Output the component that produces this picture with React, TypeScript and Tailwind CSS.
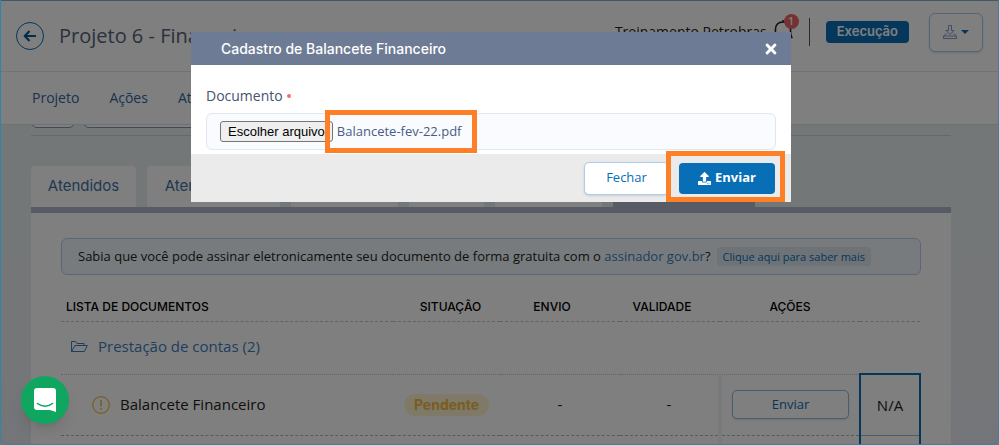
import React from "react";
import { FaTimes, FaUpload } from "react-icons/fa";

const TABS = [
  { label: "Atendidos", width: "w-[105px]" },
  { label: "Atendimentos", width: "w-[133px]" },
  { label: "", width: "w-[107px]" },
  { label: "", width: "w-[75px]" },
  { label: "", width: "w-[107px]" },
];

const BellIcon: React.FC = () => (
  <svg width="20" height="24" viewBox="0 0 20 24" fill="none" stroke="#222" strokeWidth="1.6">
    <path d="M10 0v2M1 17.500c1.500-1.500 1.500-3.500 1.500-8C2.500 5 5 2 10 2s7.500 3 7.500 7.500c0 4.500 0 6.500 1.500 8H1z" strokeLinejoin="round" />
    <path d="M8 20.500c.5 1 3.500 1 4 0" />
  </svg>
);

const DownloadIcon: React.FC = () => (
  <svg width="14" height="14" viewBox="0 0 14 14" fill="none" stroke="#7f9cd0" strokeWidth="1">
    <path d="M5.500.5h3v5h2.500L7 9.500 3 5.500h2.500z" />
    <path d="M3.500 8.500 .5 11v2.500h13V11l-3-2.500M.5 11h13" />
  </svg>
);

const FolderIcon: React.FC = () => (
  <svg width="18" height="13" viewBox="0 0 18 13" fill="none" stroke="#3f7dbd" strokeWidth="1">
    <path d="M1.500 11.500v-10h4l1.500 2h7v2" />
    <path d="M1.500 11.500 5 5.500h12.300l-3 6H1.500z" strokeLinejoin="round" />
  </svg>
);

const WarningIcon: React.FC = () => (
  <svg width="18" height="18" viewBox="0 0 18 18" fill="none" stroke="#f5b942" strokeWidth="1.200">
    <circle cx="9" cy="9" r="8.300" />
    <path d="M9 4v6.500M9 12v1.800" strokeWidth="1.600" />
  </svg>
);

const Header: React.FC = () => {
  return (
    <header className="flex h-[72px] items-center justify-between border-t border-b border-t-[#7cb4d0] border-b-[#e0e8ea] bg-white px-4">
      <div className="flex items-center gap-[15px]">
        <a
          href="#voltar"
          aria-label="Voltar"
          className="flex h-7 w-7 items-center justify-center rounded-full border border-[#086eb6]"
        >
          <svg width="14" height="12" viewBox="0 0 14 12" fill="none" stroke="#075a96" strokeWidth="2.200">
            <path d="M6.500 1 1.800 6l4.700 5M2 6h11" />
          </svg>
        </a>
        <h1 className="text-xl text-[#56627a]">Projeto 6 - Financeiro</h1>
      </div>
      <div className="flex items-center pb-2">
        <span className="text-sm text-[#222]">Treinamento Petrobras</span>
        <button type="button" aria-label="Notificações" className="relative ml-1.5">
          <BellIcon />
          <span className="absolute -right-1.5 -top-1.5 flex h-[15px] w-[15px] items-center justify-center rounded-full bg-[#e86464] text-[10px] font-semibold text-white">
            1
          </span>
        </button>
        <span className="ml-4 h-7 w-px bg-[#555]" />
        <span className="ml-4 flex h-[22px] items-center rounded bg-[#086eb6] px-[11px] font-[Inter] text-[13px] font-semibold text-white">
          Execução
        </span>
        <button
          type="button"
          aria-label="Baixar"
          className="ml-5 flex h-[39px] w-[54px] items-center justify-center gap-1 rounded-md border border-[#a9cdea] bg-white shadow-sm"
        >
          <DownloadIcon />
          <svg width="8" height="4" viewBox="0 0 8 4" fill="#086eb6">
            <path d="M0 0h8L4 4z" />
          </svg>
        </button>
      </div>
    </header>
  );
};

const DocumentsTable: React.FC = () => {
  return (
    <table className="mt-[19px] w-full table-fixed border-collapse text-center">
      <colgroup>
        <col />
        <col className="w-[107px]" />
        <col className="w-[120px]" />
        <col className="w-[100px]" />
        <col className="w-[140px]" />
        <col className="w-[60px]" />
      </colgroup>
      <thead className="font-[Inter] text-xs text-black">
        <tr className="h-[27px] border-b border-dashed border-[#b9c8da]">
          <th className="pl-[5px] text-left font-medium">LISTA DE DOCUMENTOS</th>
          <th className="pl-2 font-medium">SITUAÇÃO</th>
          <th className="pr-4 font-medium">ENVIO</th>
          <th className="pr-4 font-medium">VALIDADE</th>
          <th className="font-medium">AÇÕES</th>
          <th aria-label="Opções"></th>
        </tr>
      </thead>
      <tbody>
        <tr className="h-[53px] border-b border-dotted border-[#c4c8cc]">
          <td colSpan={6}>
            <div className="flex items-center gap-2.5 pb-0.5 pl-[9px] text-[15px] text-[#3f7dbd]">
              <FolderIcon />
              Prestação de contas (2)
            </div>
          </td>
        </tr>
        <tr className="h-[61px] border-b border-dashed border-[#a9b2c4] text-[15px] text-[#222]">
          <td>
            <div className="flex items-center gap-2.5 pl-[31px]">
              <WarningIcon />
              Balancete Financeiro
            </div>
          </td>
          <td>
            <span className="inline-flex h-[22px] items-center rounded-full bg-[#fff3cf] px-2.5 font-[Inter] text-sm font-bold text-[#f5b942]">
              Pendente
            </span>
          </td>
          <td>-</td>
          <td>-</td>
          <td className="border-l-4 border-[#eef6f6]">
            <button
              type="button"
              className="h-[29px] w-[117px] rounded-[5px] border border-[#8fbbe0] bg-white text-[13px] font-medium text-[#086eb6] shadow-sm"
            >
              Enviar
            </button>
          </td>
          <td className="border-2 border-b border-[#086eb6] border-b-[#a9b2c4]">N/A</td>
        </tr>
        <tr className="h-[61px]">
          <td colSpan={4}></td>
          <td className="border-l-4 border-[#eef6f6]"></td>
          <td className="border-x-2 border-[#086eb6]"></td>
        </tr>
      </tbody>
    </table>
  );
};

const UploadModal: React.FC = () => {
  return (
    <div className="fixed inset-0 flex items-start justify-center bg-black/50 pr-[17px] pt-8">
      <div role="dialog" aria-labelledby="modal-title" className="w-full max-w-[600px] bg-white">
        <div className="flex h-[33px] items-center justify-between bg-[#6d7b94] pl-[30px] pr-3 text-white">
          <h2 id="modal-title" className="font-[Inter] text-sm font-medium">
            Cadastro de Balancete Financeiro
          </h2>
          <button type="button" aria-label="Fechar janela">
            <FaTimes size={16} />
          </button>
        </div>
        <div className="px-[15px] pb-1 pt-5">
          <label htmlFor="documento" className="flex items-center gap-1 text-sm leading-[22px] text-[#46546e]">
            Documento
            <span className="h-1 w-1 rounded-full bg-[#f07070]" />
          </label>
          <div className="mt-1.5 flex h-[37px] items-center rounded-md border border-[#e0e7f3] bg-[#f9fbff] pl-[13px]">
            <input id="documento" type="file" className="sr-only" />
            <label
              htmlFor="documento"
              className="flex h-[21px] items-center rounded-[3px] border border-[#767676] bg-[#efefef] px-[7px] font-['Liberation_Sans'] text-[13px] text-black"
            >
              Escolher arquivo
            </label>
            <span className="relative ml-1 text-[13px] text-[#4a5c85]">
              Balancete-fev-22.pdf
              <span className="absolute -inset-y-3 -left-3 -right-4 border-[5px] border-[#ff7f27]" />
            </span>
          </div>
        </div>
        <div className="flex h-12 items-center justify-end gap-2.5 bg-[#ebebeb] pr-4">
          <button
            type="button"
            className="h-[33px] w-[85px] rounded-[5px] border border-[#a9cdea] bg-white text-[13px] font-medium text-[#086eb6] shadow-sm"
          >
            Fechar
          </button>
          <div className="relative">
            <button
              type="button"
              className="flex h-[31px] w-24 items-center justify-center gap-1 rounded bg-[#086eb6] text-[13px] font-bold text-white"
            >
              <FaUpload size={13} />
              Enviar
            </button>
            <span className="pointer-events-none absolute -bottom-2 -left-[13px] -right-2.5 -top-3 border-[5px] border-[#ff7f27]" />
          </div>
        </div>
      </div>
    </div>
  );
};

export default function App() {
  return (
    <div className="relative h-screen overflow-hidden bg-linear-to-b from-[#e8f1f1] to-[#e9ebf0] font-['Open_Sans',sans-serif]">
      <Header />
      <nav className="flex h-[53px] items-center gap-[30px] border-b border-[#d5e4e8] bg-white px-8 text-sm text-[#33679c]">
        <a href="#projeto">Projeto</a>
        <a href="#acoes">Ações</a>
        <a href="#atendimentos">Atendimentos</a>
      </nav>

      <main className="ml-[31px] mr-12">
        <div className="flex h-[3px] items-end gap-2 overflow-hidden">
          <div className="h-8 w-11 shrink-0 rounded-md border border-[#8a93ac] bg-white" />
          <div className="h-8 w-60 shrink-0 rounded-md border border-[#8a93ac] bg-white" />
        </div>
        <hr className="mt-[7px] border-[#c0d6da]" />

        <div className="mt-[30px] flex gap-[11px] font-[Inter] text-[15px] text-[#3f72a6]">
          {TABS.map((tab, i) => (
            <button
              key={i}
              type="button"
              aria-hidden={!tab.label}
              className={`h-[41px] shrink-0 rounded-t bg-white ${tab.width}`}
            >
              {tab.label}
            </button>
          ))}
          <div className="h-[41px] w-[142px] shrink-0 rounded-t bg-[#aeb6ca]" />
        </div>

        <section className="border-t-[6px] border-[#aeb6ca] bg-white px-[30px] pt-[25px]">
          <div className="flex h-[37px] items-center rounded-md border border-[#b6cdf0] bg-[#eef7fa] px-4 text-[13px] text-[#222]">
            <p>
              Sabia que você pode assinar eletronicamente seu documento de forma gratuita com o{" "}
              <a href="#assinador" className="text-[#3f7dbd]">
                assinador gov.br
              </a>
              ?
            </p>
            <a
              href="#saber-mais"
              className="ml-1.5 rounded-[3px] bg-[#dde6ef] px-1.5 text-[11px] font-medium leading-[19px] text-[#086eb6]"
            >
              Clique aqui para saber mais
            </a>
          </div>
          <DocumentsTable />
        </section>
      </main>

      <UploadModal />

      <button
        type="button"
        aria-label="Abrir chat"
        className="fixed bottom-[21px] left-[21px] flex h-12 w-12 items-center justify-center rounded-full bg-[#0fa75f] shadow-lg"
      >
        <svg width="22" height="24" viewBox="0 0 22 24">
          <path d="M3 0h16a3 3 0 0 1 3 3v21l-6-2H3a3 3 0 0 1-3-3V3a3 3 0 0 1 3-3z" fill="#fff" />
          <path d="M3.500 15.500c4 3.500 11 3.500 15 0" fill="none" stroke="#0fa75f" strokeWidth="1.500" strokeLinecap="round" />
        </svg>
      </button>

      <div className="pointer-events-none fixed inset-0 rounded-b-lg border-x border-b border-[#2f86a6]" />
    </div>
  );
}
